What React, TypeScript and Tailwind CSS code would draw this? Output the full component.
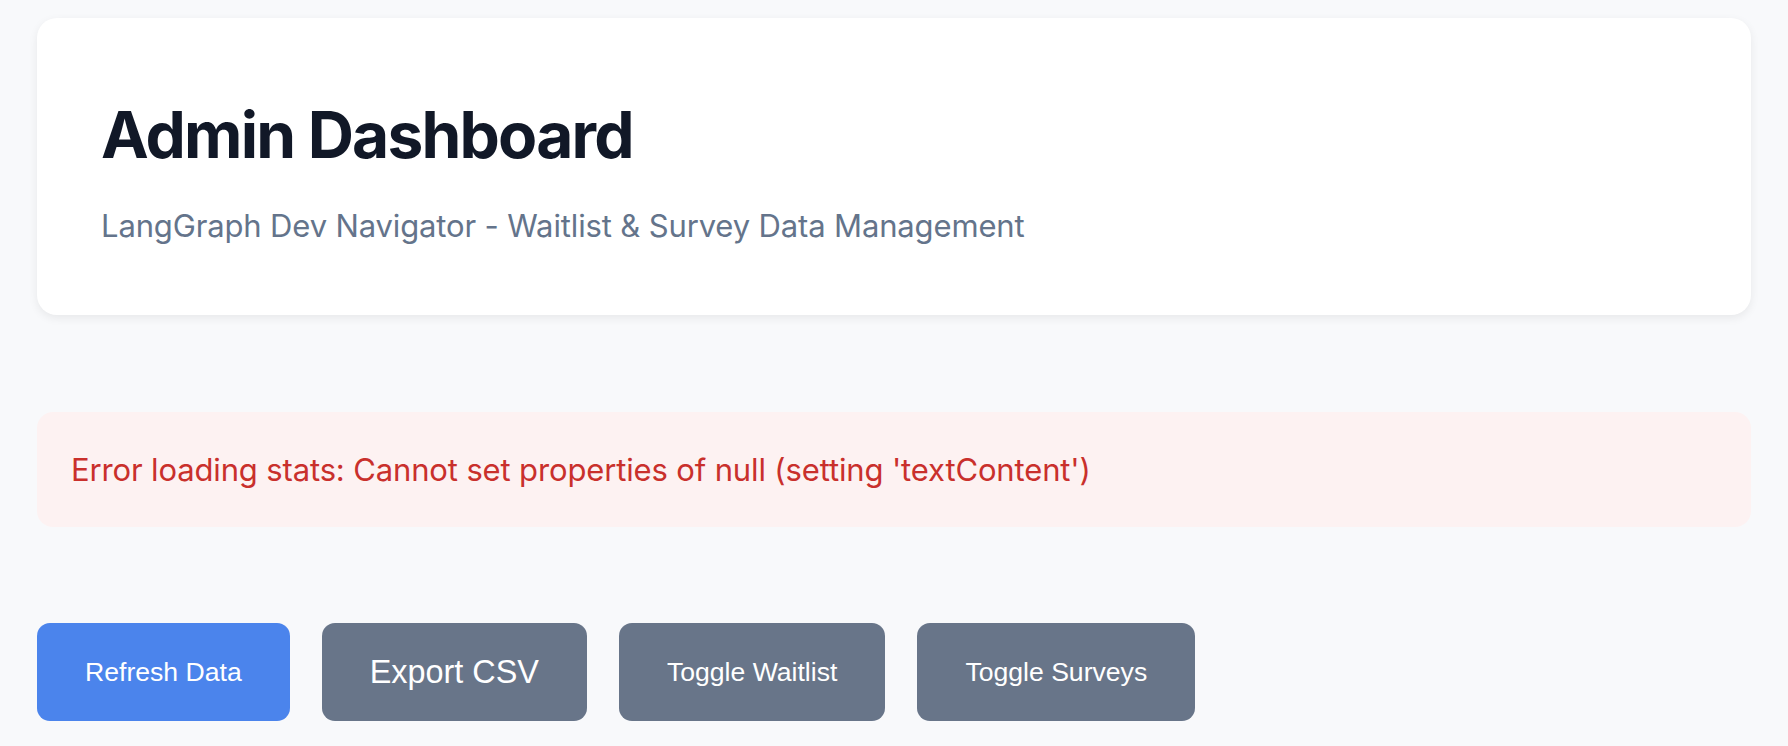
const buttons = [
  { label: "Refresh Data", tone: "bg-[#4b84ec]", size: "text-[26.6px]" },
  { label: "Export CSV", tone: "bg-[#687589]", size: "text-[32.4px]" },
  { label: "Toggle Waitlist", tone: "bg-[#687589]", size: "text-[26.6px]" },
  { label: "Toggle Surveys", tone: "bg-[#687589]", size: "text-[26.6px]" },
];

export default function App() {
  return (
    <div className="min-h-screen bg-[#f8f9fb] px-[37px] pt-[18px] font-['Inter',sans-serif]">
      {/* header card */}
      <div className="rounded-[20px] bg-white px-16 pb-[74px] pt-[85px] shadow-[0_3px_10px_rgba(0,0,0,0.07)]">
        <h1 className="text-[64px] font-bold leading-none tracking-[-0.028em] text-[#111827]">
          Admin Dashboard
        </h1>
        <p className="mt-[43px] text-[31px] leading-none tracking-[-0.14px] text-[#64748b]">
          LangGraph Dev Navigator - Waitlist &amp; Survey Data Management
        </p>
      </div>

      {/* error */}
      <div className="mt-[97px] flex h-[115px] items-center rounded-[16px] bg-[#fdf2f2] px-[34px]">
        <span className="text-[31px] leading-none tracking-[-0.14px] text-[#c9302c]">
          Error loading stats: Cannot set properties of null (setting 'textContent')
        </span>
      </div>

      {/* actions */}
      <div className="mt-[96px] flex gap-8">
        {buttons.map((b) => (
          <button
            key={b.label}
            className={`flex h-[98px] items-center rounded-[13px] px-12 font-['Liberation_Sans',Arial,sans-serif] leading-none text-white ${b.tone} ${b.size}`}
          >
            {b.label}
          </button>
        ))}
      </div>
    </div>
  );
}
